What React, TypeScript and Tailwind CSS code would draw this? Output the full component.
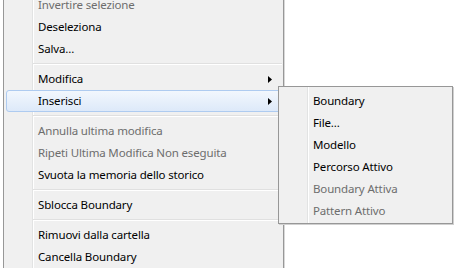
import React from "react";

type Item =
  | { kind: "item"; label: string; disabled?: boolean; arrow?: boolean; active?: boolean }
  | { kind: "sep" };

const mainItems: Item[] = [
  { kind: "item", label: "Invertire selezione", disabled: true },
  { kind: "item", label: "Deseleziona" },
  { kind: "item", label: "Salva..." },
  { kind: "sep" },
  { kind: "item", label: "Modifica", arrow: true },
  { kind: "item", label: "Inserisci", arrow: true, active: true },
  { kind: "sep" },
  { kind: "item", label: "Annulla ultima modifica", disabled: true },
  { kind: "item", label: "Ripeti Ultima Modifica Non eseguita", disabled: true },
  { kind: "item", label: "Svuota la memoria dello storico" },
  { kind: "sep" },
  { kind: "item", label: "Sblocca Boundary" },
  { kind: "sep" },
  { kind: "item", label: "Rimuovi dalla cartella" },
  { kind: "item", label: "Cancella Boundary" },
];

const subItems: Item[] = [
  { kind: "item", label: "Boundary" },
  { kind: "item", label: "File..." },
  { kind: "item", label: "Modello" },
  { kind: "item", label: "Percorso Attivo" },
  { kind: "item", label: "Boundary Attiva", disabled: true },
  { kind: "item", label: "Pattern Attivo", disabled: true },
];

function Arrow() {
  return (
    <svg width="4" height="7" viewBox="0 0 4 7" className="ml-auto mr-[11px] shrink-0">
      <path d="M0 0 L4 3.5 L0 7 Z" fill="#000" />
    </svg>
  );
}

function Row({ item }: { item: Item }) {
  if (item.kind === "sep") {
    return (
      <div className="h-[8px] pt-[3px] pl-[29px] pr-[1px]">
        <div className="h-px bg-[#e0e0e0]" />
        <div className="h-px bg-white" />
      </div>
    );
  }
  const color = item.disabled ? "text-[#6d6d6d]" : "text-black";
  if (item.active) {
    return (
      <div className="h-[22px] mx-[2px] flex items-center pl-[31px] rounded-[3px] border border-[#aecbf0] bg-[linear-gradient(to_bottom,#f2f7fd,#dde9f9)]">
        <span className={color}>{item.label}</span>
        <svg width="4" height="7" viewBox="0 0 4 7" className="ml-auto mr-[8px] shrink-0">
          <path d="M0 0 L4 3.5 L0 7 Z" fill="#000" />
        </svg>
      </div>
    );
  }
  return (
    <div className="h-[22px] flex items-center pl-[34px]">
      <span className={color}>{item.label}</span>
      {item.arrow && <Arrow />}
    </div>
  );
}

const gutter =
  "bg-[linear-gradient(to_right,#f0f0f0_28px,#e2e3e3_28px,#e2e3e3_29px,#ffffff_29px,#ffffff_30px,#f0f0f0_30px)]";

export default function App() {
  return (
    <div
      className="relative w-[456px] h-[268px] overflow-hidden bg-white text-[11.5px] tracking-[-0.15px] leading-none"
      style={{ fontFamily: '"Noto Sans", "Open Sans", sans-serif' }}
    >
      <div
        className={`ml-[3px] -mt-[6px] w-[281px] h-[290px] border-l border-r border-[#979797] shadow-[1px_0_0_#d8d8d8] ${gutter}`}
      >
        {mainItems.map((it, i) => (
          <Row key={i} item={it} />
        ))}
      </div>
      <div
        className={`absolute left-[278px] top-[86px] w-[175px] border border-[#979797] pt-[3px] pb-[1px] shadow-[1px_1px_0_#d0d0d0] ${gutter}`}
      >
        {subItems.map((it, i) => (
          <Row key={i} item={it} />
        ))}
      </div>
    </div>
  );
}
